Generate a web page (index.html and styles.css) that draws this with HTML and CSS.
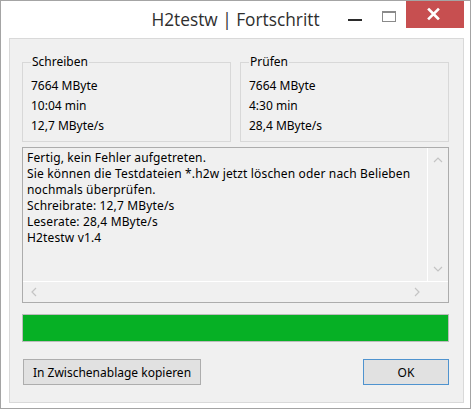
FILE: index.html
```html
<!DOCTYPE html>
<html lang="de">
<head>
<meta charset="utf-8">
<title>H2testw | Fortschritt</title>
<link rel="stylesheet" href="styles.css">
</head>
<body>
<div class="window">
  <div class="titlebar">
    <div class="spacer"></div>
    <div class="title">H2testw | Fortschritt</div>
    <div class="controls">
      <span class="ctl ctl-min"><svg width="28" height="27" viewBox="0 0 28 27"><rect x="7" y="18" width="14" height="2" fill="#2b2b2b"/></svg></span>
      <span class="ctl ctl-max"><svg width="28" height="27" viewBox="0 0 28 27"><rect x="7.5" y="10.5" width="13" height="10" fill="none" stroke="#8a8a8a" stroke-width="1"/><rect x="7" y="10" width="14" height="2" fill="#8a8a8a"/></svg></span>
      <span class="ctl ctl-close"><svg width="58" height="27" viewBox="0 0 58 27"><path d="M23 8.5 L32 17.5 M32 8.5 L23 17.5" stroke="#fff" stroke-width="2.6" stroke-linecap="square"/></svg></span>
    </div>
  </div>
  <div class="client">
    <div class="groups">
      <fieldset class="group">
        <legend>Schreiben</legend>
        <div class="val">7664 MByte</div>
        <div class="val">10:04 min</div>
        <div class="val">12,7 MByte/s</div>
      </fieldset>
      <fieldset class="group">
        <legend>Prüfen</legend>
        <div class="val">7664 MByte</div>
        <div class="val">4:30 min</div>
        <div class="val">28,4 MByte/s</div>
      </fieldset>
    </div>
    <div class="log">
      <div class="log-text">
        <div>Fertig, kein Fehler aufgetreten.</div>
        <div>Sie können die Testdateien *.h2w jetzt löschen oder nach Belieben</div>
        <div>nochmals überprüfen.</div>
        <div>Schreibrate: 12,7 MByte/s</div>
        <div>Leserate: 28,4 MByte/s</div>
        <div>H2testw v1.4</div>
      </div>
      <div class="vscroll">
        <span class="arrow-v"><svg width="10" height="6" viewBox="0 0 10 6"><path d="M1 5 L5 1 L9 5" fill="none" stroke="#c4c4c4" stroke-width="1.2"/></svg></span>
        <span class="arrow-v"><svg width="10" height="6" viewBox="0 0 10 6"><path d="M1 1 L5 5 L9 1" fill="none" stroke="#c4c4c4" stroke-width="1.2"/></svg></span>
      </div>
      <div class="hscroll">
        <span class="arrow-h"><svg width="6" height="10" viewBox="0 0 6 10"><path d="M5 1 L1 5 L5 9" fill="none" stroke="#c4c4c4" stroke-width="1.2"/></svg></span>
        <span class="arrow-h"><svg width="6" height="10" viewBox="0 0 6 10"><path d="M1 1 L5 5 L1 9" fill="none" stroke="#c4c4c4" stroke-width="1.2"/></svg></span>
      </div>
      <div class="corner"></div>
    </div>
    <div class="progress"><div class="fill" style="width:100%"></div></div>
    <div class="buttons">
      <button class="btn btn-copy">In Zwischenablage kopieren</button>
      <button class="btn btn-ok">OK</button>
    </div>
  </div>
</div>
</body>
</html>
```

FILE: styles.css
```css
html, body {
  margin: 0;
  padding: 0;
  background: #ffffff;
}

body {
  font-family: "Noto Sans", "Open Sans", "DejaVu Sans", sans-serif;
  font-size: 12px;
  color: #000;
}

.window {
  width: 471px;
  height: 409px;
  box-sizing: border-box;
  border: 1px solid #a4a4a4;
  background: #ffffff;
}

.titlebar {
  height: 37px;
  display: grid;
  grid-template-columns: 1fr auto 1fr;
  align-items: start;
}

.title {
  font-family: "Open Sans", "Noto Sans", sans-serif;
  font-size: 17.3px;
  line-height: 22px;
  color: #2e2e2e;
  padding-top: 8px;
  white-space: nowrap;
}

.controls {
  justify-self: end;
  display: flex;
  align-items: flex-start;
  margin-right: 6px;
}

.ctl {
  display: block;
  height: 27px;
}

.ctl svg {
  display: block;
}

.ctl-min {
  width: 28px;
}

.ctl-max {
  width: 28px;
  margin-left: 6px;
  margin-right: 3px;
}

.ctl-close {
  width: 58px;
  background: #c74f50;
}

.client {
  margin: 0 6px 0 8px;
  border: 1px solid #d9d9d9;
  background: #f0f0f0;
  padding: 15px 14px 17px 12px;
}

.groups {
  display: grid;
  grid-template-columns: 1fr 1fr;
  column-gap: 9px;
}

.group {
  margin: 0;
  min-width: 0;
  border: 1px solid #d8d8d8;
  padding: 6px 8px 5px 8px;
}

.group legend {
  padding: 0 1px;
  font-size: 12px;
  line-height: 16px;
}

.val {
  line-height: 20px;
  white-space: nowrap;
}

.log {
  margin-top: 5px;
  height: 156px;
  box-sizing: border-box;
  border: 1px solid #acacac;
  display: grid;
  grid-template-columns: 1fr 20px;
  grid-template-rows: 1fr 20px;
}

.log-text {
  padding: 2px 4px;
  line-height: 16px;
  letter-spacing: 0.15px;
  white-space: nowrap;
  overflow: hidden;
  border-right: 1px solid #ffffff;
  border-bottom: 1px solid #ffffff;
}

.vscroll {
  display: flex;
  flex-direction: column;
  justify-content: space-between;
  border-bottom: 1px solid #ffffff;
}

.arrow-v {
  height: 24px;
  display: flex;
  align-items: center;
  justify-content: center;
}

.hscroll {
  display: flex;
  justify-content: space-between;
}

.arrow-h {
  width: 22px;
  display: flex;
  align-items: center;
  justify-content: center;
}

.arrow-v svg,
.arrow-h svg {
  display: block;
}

.progress {
  margin-top: 11px;
  height: 28px;
  box-sizing: border-box;
  border: 1px solid #bcbcbc;
  background: #e6e6e6;
}

.progress .fill {
  height: 100%;
  background: #06b025;
}

.buttons {
  margin-top: 17px;
  display: flex;
  justify-content: space-between;
}

.btn {
  height: 26px;
  box-sizing: border-box;
  font-family: "Noto Sans", "Open Sans", sans-serif;
  font-size: 12px;
  color: #000;
  background: #e1e1e1;
  border: 1px solid #adadad;
  padding: 0;
  margin: 0;
}

.btn-copy {
  width: 178px;
  margin-left: 1px;
}

.btn-ok {
  width: 86px;
  border-color: #4f93cf;
}
```
